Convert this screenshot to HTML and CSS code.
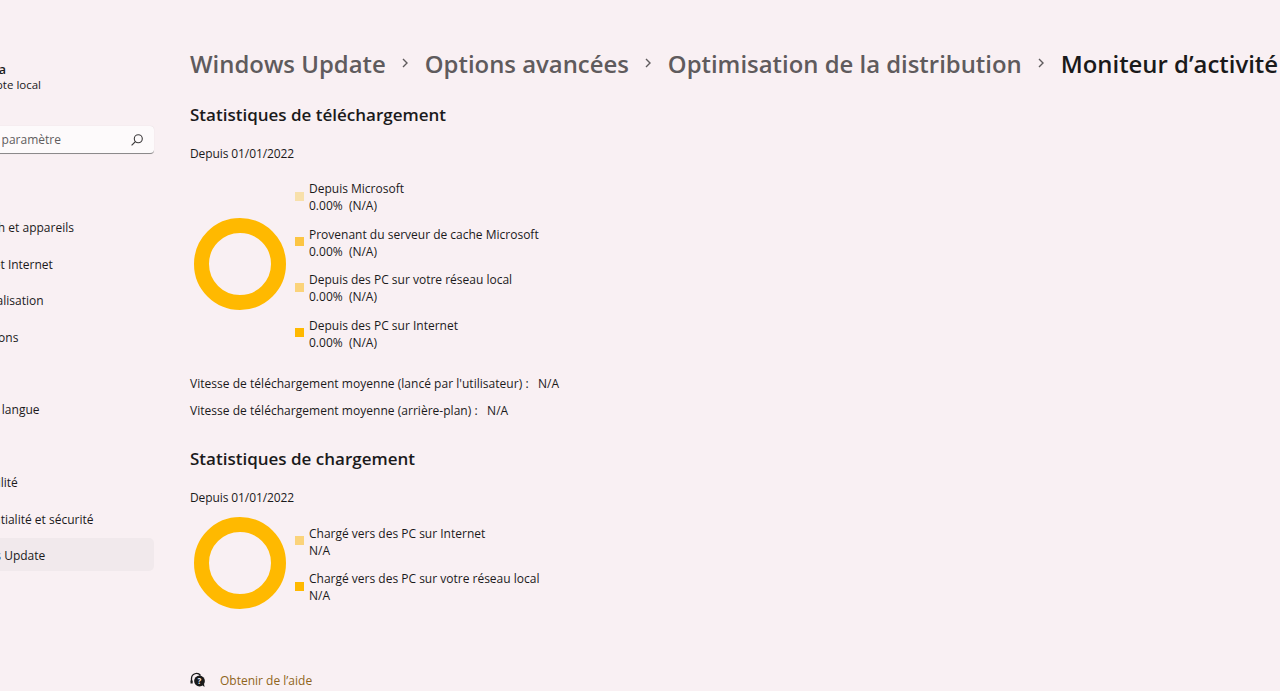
FILE: index.html
```html
<!DOCTYPE html>
<html lang="fr">
<head>
    <meta charset="UTF-8">
    <title>Moniteur d'activité</title>
    <link rel="stylesheet" href="styles.css">
</head>
<body>
    <div class="window">
        <div class="sidebar">
            <div class="user">
                <div class="user-name">Maria</div>
                <div class="user-type">Compte local</div>
            </div>
            <div class="search">
                <span>Rechercher un paramètre</span>
                <svg class="search-icon" width="14" height="14" viewBox="0 0 14 14">
                    <circle cx="8.3" cy="5.7" r="4" fill="none" stroke="#3c3a3b" stroke-width="1.1"/>
                    <path d="M5.4 8.6L1.6 12.4" stroke="#3c3a3b" stroke-width="1.2" fill="none"/>
                </svg>
            </div>
            <div class="nav">
                <div class="nav-item">Système</div>
                <div class="nav-item">Bluetooth et appareils</div>
                <div class="nav-item">Réseau et Internet</div>
                <div class="nav-item">Personnalisation</div>
                <div class="nav-item">Applications</div>
                <div class="nav-item">Comptes</div>
                <div class="nav-item">Heure et langue</div>
                <div class="nav-item">Jeux</div>
                <div class="nav-item">Accessibilité</div>
                <div class="nav-item">Confidentialité et sécurité</div>
                <div class="nav-item active">Windows Update</div>
            </div>
        </div>
        <div class="main">
            <div class="breadcrumb">
                <span>Windows Update</span>
                <svg class="chevron" width="10" height="12" viewBox="0 0 10 12"><path d="M3 2l4 4-4 4" fill="none" stroke="#5f5b5d" stroke-width="1.4"/></svg>
                <span>Options avancées</span>
                <svg class="chevron" width="10" height="12" viewBox="0 0 10 12"><path d="M3 2l4 4-4 4" fill="none" stroke="#5f5b5d" stroke-width="1.4"/></svg>
                <span>Optimisation de la distribution</span>
                <svg class="chevron" width="10" height="12" viewBox="0 0 10 12"><path d="M3 2l4 4-4 4" fill="none" stroke="#5f5b5d" stroke-width="1.4"/></svg>
                <span class="current">Moniteur d’activité</span>
            </div>

            <h2 class="first">Statistiques de téléchargement</h2>
            <p class="since">Depuis 01/01/2022</p>
            <div class="chart-row">
                <div class="donut"></div>
                <div class="legend">
                    <div class="legend-item">
                        <span class="swatch c1"></span>
                        <div>Depuis Microsoft<br>0.00%&nbsp; (N/A)</div>
                    </div>
                    <div class="legend-item">
                        <span class="swatch c2"></span>
                        <div>Provenant du serveur de cache Microsoft<br>0.00%&nbsp; (N/A)</div>
                    </div>
                    <div class="legend-item">
                        <span class="swatch c3"></span>
                        <div>Depuis des PC sur votre réseau local<br>0.00%&nbsp; (N/A)</div>
                    </div>
                    <div class="legend-item">
                        <span class="swatch c4"></span>
                        <div>Depuis des PC sur Internet<br>0.00%&nbsp; (N/A)</div>
                    </div>
                </div>
            </div>
            <p class="speed first-speed">Vitesse de téléchargement moyenne (lancé par l'utilisateur) :&nbsp;&nbsp; N/A</p>
            <p class="speed">Vitesse de téléchargement moyenne (arrière-plan) :&nbsp;&nbsp; N/A</p>

            <h2 class="second">Statistiques de chargement</h2>
            <p class="since">Depuis 01/01/2022</p>
            <div class="chart-row upload">
                <div class="donut"></div>
                <div class="legend">
                    <div class="legend-item">
                        <span class="swatch c3"></span>
                        <div>Chargé vers des PC sur Internet<br>N/A</div>
                    </div>
                    <div class="legend-item">
                        <span class="swatch c4"></span>
                        <div>Chargé vers des PC sur votre réseau local<br>N/A</div>
                    </div>
                </div>
            </div>

            <div class="help">
                <svg width="16" height="16" viewBox="0 0 16 16">
                    <path d="M1.5 10V6.5a5 5 0 0 1 9-3" fill="none" stroke="#1a1a1a" stroke-width="1.3"/>
                    <path d="M0.5 8.5h2.2v3H0.5z" fill="#1a1a1a"/>
                    <circle cx="9.5" cy="9" r="5.4" fill="#1a1a1a"/>
                    <path d="M12 13l2.5 2-.5-3.5z" fill="#1a1a1a"/>
                    <text x="9.5" y="12" class="help-mark">?</text>
                </svg>
                <a href="#">Obtenir de l’aide</a>
            </div>
        </div>
    </div>
</body>
</html>
```

FILE: styles.css
```css
html, body {
    margin: 0;
    height: 100%;
    overflow: hidden;
}

body {
    background: #f9f0f3;
    color: #1b1a1b;
    font-family: "Open Sans", "Noto Sans", sans-serif;
    font-size: 12px;
}

.window {
    display: flex;
    height: 691px;
    overflow: hidden;
}

.sidebar {
    width: 241px;
    margin-left: -87px;
    flex-shrink: 0;
}

.user {
    margin-top: 62px;
    padding-left: 58px;
    line-height: 15px;
}

.user-name {
    font-weight: 600;
    font-size: 12.5px;
}

.user-type {
    font-size: 11.5px;
}

.search {
    display: flex;
    align-items: center;
    justify-content: space-between;
    height: 27px;
    margin-top: 34px;
    padding: 0 10px 0 0;
    background: #fdfafb;
    border-radius: 4px;
    border-bottom: 1px solid #8c8a8b;
    box-shadow: 0 0 1px rgba(0, 0, 0, 0.15);
    color: #5f5d5e;
}

.search span {
    padding-left: 4px;
}

.nav {
    margin-top: 20px;
}

.nav-item {
    display: flex;
    align-items: center;
    box-sizing: border-box;
    height: 33px;
    margin-bottom: 3.4px;
    padding: 2px 0 0 37px;
    border-radius: 5px;
}

.nav-item.active {
    background: #f1e9ec;
}

.main {
    flex: 1;
    min-width: 0;
    padding-left: 36px;
    overflow: hidden;
}

.breadcrumb {
    display: flex;
    align-items: center;
    gap: 14.5px;
    margin-top: 45px;
    height: 36px;
    font-size: 23.9px;
    font-weight: 600;
    color: #5f5b5d;
    white-space: nowrap;
}

.breadcrumb .current {
    color: #1a1a1a;
}

.chevron {
    flex-shrink: 0;
}

h2 {
    margin: 0;
    font-size: 17px;
    font-weight: 600;
    line-height: 24px;
}

h2.first {
    margin-top: 22px;
}

h2.second {
    margin-top: 28px;
}

.since {
    margin: 18px 0 0;
    line-height: 17px;
    letter-spacing: -0.1px;
}

.chart-row {
    display: flex;
    align-items: center;
    margin-top: 18px;
}

.chart-row.upload {
    margin-top: 11px;
}

.donut {
    width: 62px;
    height: 62px;
    margin: 0 9px 2px 4px;
    border: 15px solid #ffb900;
    border-radius: 50%;
    flex-shrink: 0;
}

.upload .donut {
    margin-bottom: 4px;
}

.legend {
    display: flex;
    flex-direction: column;
    gap: 11.5px;
    line-height: 17px;
}

.legend-item {
    display: flex;
    align-items: center;
    gap: 5px;
}

.swatch {
    width: 9px;
    height: 9px;
    margin-bottom: 2px;
    flex-shrink: 0;
}

.c1 { background: #f8e0ab; }
.c2 { background: #fcc543; }
.c3 { background: #fbd37a; }
.c4 { background: #ffb900; }

.speed {
    margin: 10px 0 0;
    line-height: 17px;
    letter-spacing: 0.03px;
}

.speed.first-speed {
    margin-top: 24px;
}

.help {
    display: flex;
    align-items: center;
    gap: 14px;
    margin-top: 59px;
}

.help a {
    color: #8f6420;
    text-decoration: none;
}

.help-mark {
    fill: #f9f0f3;
    font-size: 8px;
    font-weight: 700;
    text-anchor: middle;
}
```
